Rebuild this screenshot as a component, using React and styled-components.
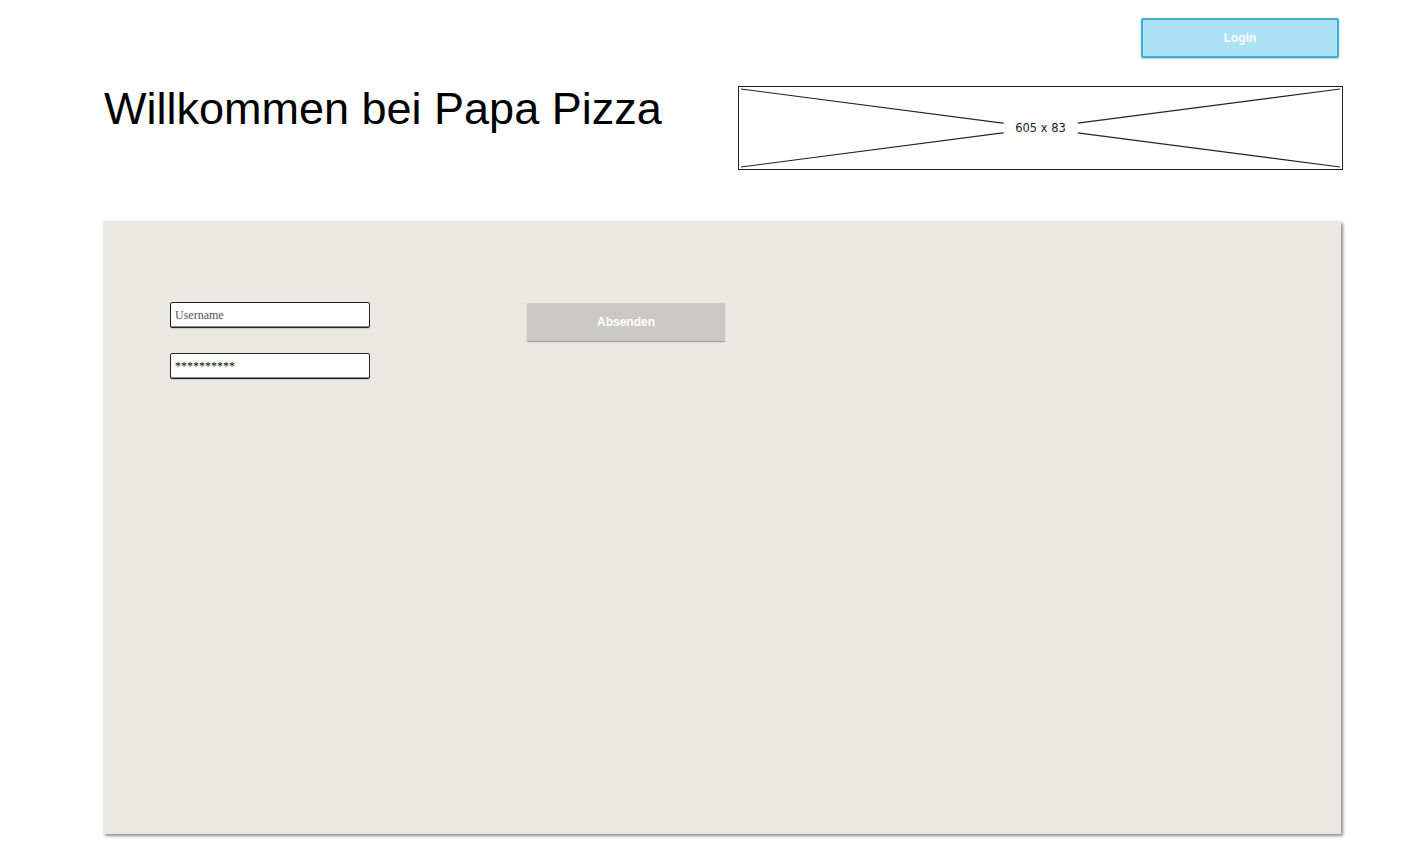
import styled, { createGlobalStyle } from "styled-components";

const GlobalStyle = createGlobalStyle`
  body {
    margin: 0;
    background: #ffffff;
    font-family: "Liberation Sans", Arial, sans-serif;
  }
`;

const Page = styled.div`
  width: 1240px;
  margin-left: 103px;
  padding: 18px 0 10px;
`;

const TopBar = styled.div`
  display: flex;
  justify-content: flex-end;
  padding-right: 4px;
`;

const LoginButton = styled.button`
  width: 198px;
  height: 40px;
  background: #ade1f4;
  border: 2px solid #3aaed6;
  border-radius: 2px;
  box-shadow: 0 1px 2px rgba(0, 0, 0, 0.25);
  color: #ffffff;
  font-family: "Liberation Sans", Arial, sans-serif;
  font-size: 12px;
  font-weight: 700;
  cursor: pointer;
`;

const Hero = styled.div`
  display: flex;
  justify-content: space-between;
  align-items: flex-start;
  margin-top: 28px;
`;

const Heading = styled.h1`
  margin: 0;
  padding-left: 1px;
  font-family: "Liberation Sans", Arial, sans-serif;
  font-size: 45px;
  font-weight: 400;
  line-height: 46px;
  color: #000000;
`;

const Placeholder = styled.div`
  position: relative;
  width: 603px;
  height: 82px;
  border: 1px solid #222;
  background: #ffffff;

  svg {
    display: block;
    width: 100%;
    height: 100%;
  }
`;

const PlaceholderLabel = styled.span`
  position: absolute;
  left: 50%;
  top: 50%;
  transform: translate(-50%, -50%);
  padding: 2px 12px;
  background: #ffffff;
  font-family: "DejaVu Sans", sans-serif;
  font-size: 11.5px;
  color: #222;
`;

const Panel = styled.section`
  margin: 51px 2px 0 0;
  height: 613px;
  background: #ebe8e2;
  box-shadow: 2px 2px 3px rgba(0, 0, 0, 0.45);
  padding: 81px 0 0 67px;
  box-sizing: border-box;
  display: flex;
  align-items: flex-start;
  gap: 157px;
`;

const Fields = styled.div`
  display: flex;
  flex-direction: column;
  gap: 25px;
`;

const Field = styled.input`
  width: 200px;
  height: 26px;
  box-sizing: border-box;
  border: 1px solid #222;
  border-radius: 2px;
  box-shadow: inset 0 -1px 0 #888, 0 1px 1px rgba(0, 0, 0, 0.15);
  padding: 0 4px;
  background: #ffffff;
  font-family: "Liberation Serif", "Times New Roman", serif;
  font-size: 12px;
  color: #000;

  &::placeholder {
    color: #555;
  }
`;

const SubmitButton = styled.button`
  width: 198px;
  height: 38px;
  margin-top: 1px;
  background: #cbc9c5;
  border: none;
  border-radius: 1px;
  box-shadow: 0 1px 1px rgba(0, 0, 0, 0.35);
  color: #ffffff;
  font-family: "Liberation Sans", Arial, sans-serif;
  font-size: 12px;
  font-weight: 700;
  cursor: pointer;
`;

const App = () => {
  return (
    <>
      <GlobalStyle />
      <Page>
        <TopBar>
          <LoginButton>Login</LoginButton>
        </TopBar>

        <Hero>
          <Heading>Willkommen bei Papa Pizza</Heading>
          <Placeholder>
            <svg viewBox="0 0 603 82" preserveAspectRatio="none">
              <line x1="2" y1="2" x2="601" y2="80" stroke="#222" strokeWidth="1.2" />
              <line x1="601" y1="2" x2="2" y2="80" stroke="#222" strokeWidth="1.2" />
            </svg>
            <PlaceholderLabel>605 x 83</PlaceholderLabel>
          </Placeholder>
        </Hero>

        <Panel>
          <Fields>
            <Field type="text" placeholder="Username" />
            <Field type="text" defaultValue="**********" />
          </Fields>
          <SubmitButton>Absenden</SubmitButton>
        </Panel>
      </Page>
    </>
  );
};

export default App;
